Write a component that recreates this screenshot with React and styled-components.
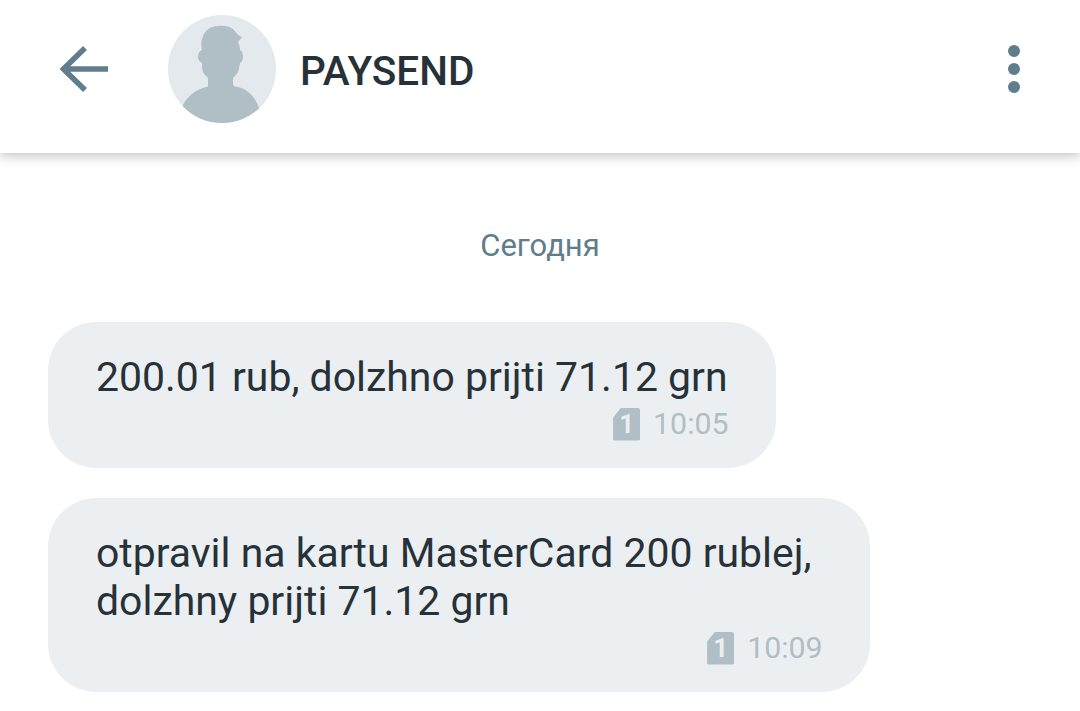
import React from 'react';
import styled, { createGlobalStyle } from 'styled-components';

const GlobalStyle = createGlobalStyle`
  html, body {
    margin: 0;
    padding: 0;
    background: #fff;
    font-family: Roboto, "Liberation Sans", sans-serif;
  }
  body {
    overflow: hidden;
  }
`;

const Screen = styled.div`
  width: 1080px;
  height: 711px;
  overflow: hidden;
  background: #fff;
`;

const Header = styled.header`
  height: 153px;
  box-sizing: border-box;
  display: flex;
  align-items: center;
  padding: 0 48px 15px 60px;
  background: #fff;
  box-shadow: 0 2px 12px rgba(0, 0, 0, 0.28);
`;

const BackButton = styled.svg`
  width: 48px;
  height: 48px;
  flex: none;
  margin-right: 60px;
`;

const Avatar = styled.svg`
  width: 108px;
  height: 108px;
  flex: none;
  margin-right: 24px;
`;

const Title = styled.div`
  flex: 1;
  padding-top: 4px;
  font-size: 40.5px;
  line-height: 44px;
  font-weight: 500;
  color: #263238;
`;

const MenuDots = styled.div`
  display: flex;
  flex-direction: column;
  gap: 6px;
  margin-right: 12px;
`;

const Dot = styled.span`
  width: 12px;
  height: 12px;
  border-radius: 50%;
  background: #607d8b;
`;

const Thread = styled.main`
  display: flex;
  flex-direction: column;
  align-items: flex-start;
  gap: 30px;
  padding: 0 48px;
`;

const DateLabel = styled.div`
  align-self: stretch;
  margin-top: 75px;
  margin-bottom: 28px;
  text-align: center;
  font-size: 31px;
  line-height: 36px;
  color: #607d8b;
`;

const Bubble = styled.div`
  box-sizing: border-box;
  padding: 31px 48px 26px;
  background: #eceff1;
  border-radius: 48px;
`;

const Message = styled.div`
  padding-right: ${(props) => props.$trail || 0}px;
  font-size: 40.95px;
  line-height: 48px;
  color: #263238;
`;

const Meta = styled.div`
  display: flex;
  justify-content: flex-end;
  align-items: center;
  gap: 13px;
  margin: 5px -1px 0 0;
  font-size: 30.3px;
  line-height: 36px;
  color: #b0bec5;
`;

const SimBadge = styled.span`
  width: 27px;
  height: 33px;
  display: flex;
  align-items: center;
  justify-content: center;
  background: #b0bec5;
  border-radius: 2px;
  clip-path: polygon(30% 0, 100% 0, 100% 100%, 0 100%, 0 30%);
  color: #eceff1;
  font-size: 26px;
  font-weight: 700;
  line-height: 1;
`;

const App = () => (
  <Screen>
    <GlobalStyle />
    <Header>
      <BackButton viewBox="0 0 48 48">
        <path d="M48 24H4M25 3L3.5 24L25 45" fill="none" stroke="#607d8b" strokeWidth="5.5" />
      </BackButton>
      <Avatar viewBox="0 0 108 108">
        <defs>
          <clipPath id="avatar-circle">
            <circle cx="54" cy="54" r="54" />
          </clipPath>
        </defs>
        <circle cx="54" cy="54" r="54" fill="#e4e9ed" />
        <path
          clipPath="url(#avatar-circle)"
          fill="#b0bec5"
          d="M34 35C33 31 33 27 34 24C36 16 42 11 50 11C56 10 61 11 65 14C68 17 70 21 74 22L70 27C71 29 72 32 72 35C74 36 75 39 75 42C75 45 74 47 72 48C71 52 71 55 70 57C69 59 67 61 65 63V69C65 71 67 72 70 72C79 74 87 81 91 93L100 110H8L15 90C19 81 29 74 38 72C40 72 40 71 40 69V63C38 61 36 59 35 57C34 54 34 51 34 48C32 47 30 45 30 42C30 39 31 36 34 35Z"
        />
      </Avatar>
      <Title>PAYSEND</Title>
      <MenuDots>
        <Dot />
        <Dot />
        <Dot />
      </MenuDots>
    </Header>
    <Thread>
      <DateLabel>Сегодня</DateLabel>
      <Bubble>
        <Message>200.01 rub, dolzhno prijti 71.12 grn</Message>
        <Meta>
          <SimBadge>1</SimBadge>
          10:05
        </Meta>
      </Bubble>
      <Bubble>
        <Message $trail={10}>
          otpravil na kartu MasterCard 200 rublej,
          <br />
          dolzhny prijti 71.12 grn
        </Message>
        <Meta>
          <SimBadge>1</SimBadge>
          10:09
        </Meta>
      </Bubble>
    </Thread>
  </Screen>
);

export default App;
